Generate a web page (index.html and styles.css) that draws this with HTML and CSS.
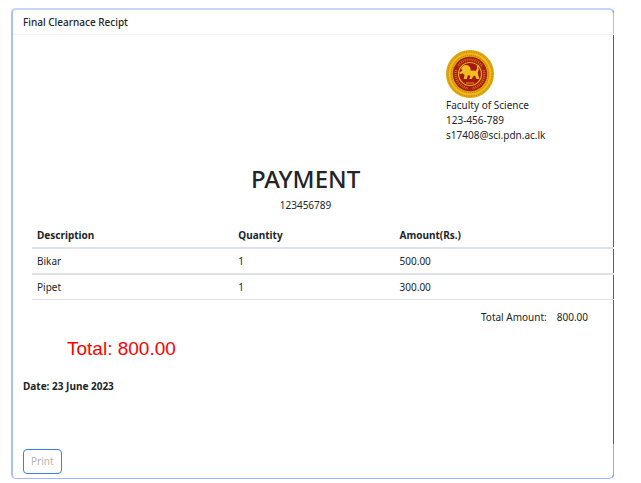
FILE: index.html
```html
<!DOCTYPE html>
<html lang="en">
<head>
<meta charset="utf-8">
<title>Final Clearnace Recipt</title>
<link rel="stylesheet" href="styles.css">
</head>
<body>
<main class="card">
  <header class="card-header">Final Clearnace Recipt</header>
  <div class="card-body">
    <address class="issuer">
      <svg class="seal" viewBox="0 0 48 48" role="img" aria-label="University seal">
        <circle cx="24" cy="24" r="24" fill="#e2a60f"/>
        <circle cx="24" cy="24" r="22.2" fill="none" stroke="#c98212" stroke-width="1" stroke-dasharray="1 1.5"/>
        <circle cx="24" cy="24" r="20.4" fill="none" stroke="#efbf1e" stroke-width="1.400"/>
        <circle cx="24" cy="24" r="18.6" fill="none" stroke="#c47a12" stroke-width="1" stroke-dasharray="1 1"/>
        <circle cx="24" cy="24" r="17.2" fill="#a81c12"/>
        <circle cx="24" cy="24" r="14.4" fill="none" stroke="#d38b1c" stroke-width="2.4" stroke-dasharray="1 1" stroke-opacity=".8"/>
        <g fill="#a81c12"><circle cx="10.500" cy="18" r="2"/><circle cx="37.500" cy="18" r="2"/><circle cx="24" cy="38.500" r="2"/></g>
        <circle cx="24" cy="24" r="11.5" fill="#a51811" stroke="#e6b021" stroke-width="1.2"/>
        <g transform="translate(-4.300 -4.800) scale(1.200)">
          <path fill="#f0bd25" d="M17 18l2-1.500 3 .2 1.800 2 .4 2.300 4.300.3 1-1.800-.3-2 1.500-1 .6 1-.8 1 .5 2-1 2 .6 3 .8 2.700h-2.400l-1.300-3-1.700.8-.8 2.200h-2.200l.9-2.800-2.200-.3-.8 3.100h-2.600l.8-3.400-1.700-1.400-2 .8-.7-1.500 2.500-1.400-1-1.600z"/>
        </g>
        <path fill="none" stroke="#d99a1d" stroke-width="1" d="M20 33h8"/>
      </svg>
      <span>Faculty of Science</span>
      <span>123-456-789</span>
      <span>s17408@sci.pdn.ac.lk</span>
    </address>
    <h1 class="title">PAYMENT</h1>
    <p class="number">123456789</p>
    <table class="items">
      <thead>
        <tr><th class="col-description">Description</th><th class="col-quantity">Quantity</th><th>Amount(Rs.)</th></tr>
      </thead>
      <tbody>
        <tr><td>Bikar</td><td>1</td><td>500.00</td></tr>
        <tr><td>Pipet</td><td>1</td><td>300.00</td></tr>
      </tbody>
    </table>
    <div class="amount"><span>Total Amount:</span><span>800.00</span></div>
    <p class="total">Total: 800.00</p>
    <p class="date">Date: 23 June 2023</p>
  </div>
  <footer class="card-footer"><button class="print" type="button">Print</button></footer>
</main>
</body>
</html>
```
FILE: styles.css
```css
* {
  box-sizing: border-box;
}

body {
  margin: 8px 27px 4px 11px;
  background: #fff;
  color: #212529;
  font: 10px/15px "Noto Sans", "Open Sans", sans-serif;
}

.card {
  display: flex;
  flex-direction: column;
  min-height: calc(100vh - 12px);
  border: 2px solid #a9c0fd;
  border-top-color: #c7d5fb;
  border-right: 1px solid #1b67dc;
  border-bottom: 1px solid #a0b9fb;
  border-radius: 5px;
  box-shadow: 0 0 10px 3px rgba(0, 0, 0, 0.08);
  clip-path: inset(-8px -7px 0 -7px);
}

.card-header {
  margin-right: -1px;
  padding: 5px 10px 4px;
  border-right: 1px solid #a9c0fd;
  border-bottom: 1px solid #f5f5f5;
  border-top-right-radius: 4px;
  font-weight: 500;
}

.card-body {
  flex: 1;
}

.issuer {
  display: flex;
  flex-direction: column;
  margin: 15px 0 0 calc(72% + 1px);
  font-style: normal;
}

.seal {
  width: 48px;
  height: 48px;
}

.title {
  margin: 20px 15px 0 0;
  font-size: 24px;
  font-weight: 500;
  line-height: 32px;
  text-align: center;
}

.number {
  margin: 3px 15px 0 0;
  text-align: center;
}

.items {
  width: calc(100% - 18px);
  margin: 10px -1px 0 19px;
  border-collapse: separate;
  border-spacing: 0;
  table-layout: fixed;
  text-align: left;
}

.items th,
.items td {
  padding: 5px;
  line-height: 14px;
  border-bottom: 2px solid #dee2e6;
}

.items th {
  font-weight: 700;
}

.items tr:last-child td {
  border-bottom-width: 1px;
}

.col-description {
  width: 34.6%;
}

.col-quantity {
  width: 27.7%;
}

.amount {
  display: flex;
  justify-content: flex-end;
  gap: 10px;
  margin: 10px 25px 0 0;
}

.total {
  margin: 14px 0 0 54px;
  color: #f00;
  font: 19px/20px "Liberation Sans", Arial, sans-serif;
}

.date {
  margin: 20px 0 0 10px;
  font-weight: 700;
}

.card-footer {
  margin-right: -1px;
  padding: 5px 10px 4px;
  border-right: 1px solid #8eadf5;
  border-bottom-right-radius: 4px;
}

.print {
  display: block;
  padding: 4px 7px;
  border: 1px solid #3b7cfb;
  border-radius: 4px;
  background: #fff;
  color: #b5b5b5;
  font: inherit;
}
```
